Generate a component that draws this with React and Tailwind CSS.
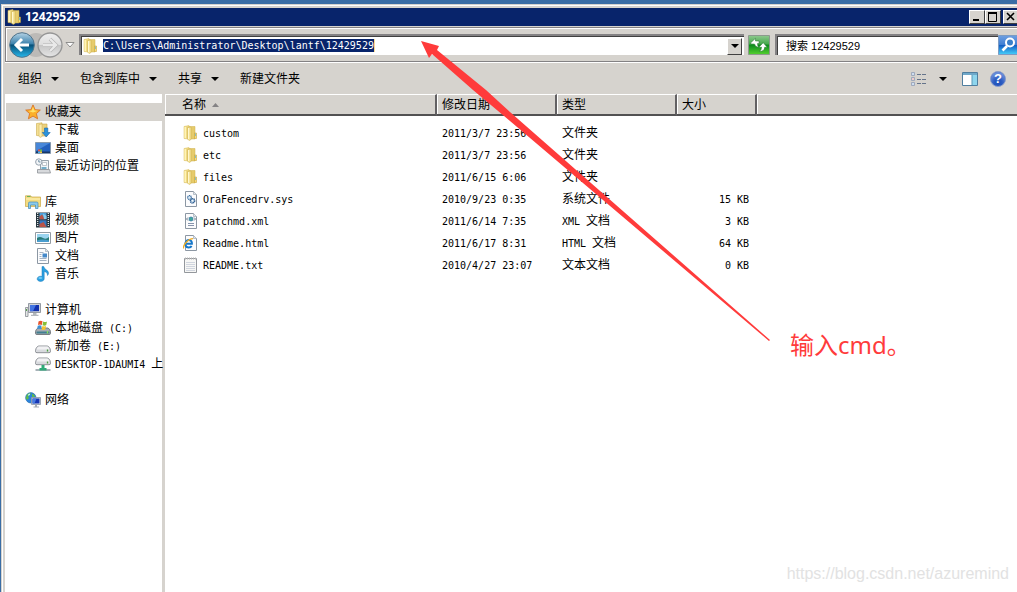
import { useState } from 'react';

const FILES = [
  { name: 'custom', date: '2011/3/7 23:56', type: '文件夹', size: '', icon: FolderIcon },
  { name: 'etc', date: '2011/3/7 23:56', type: '文件夹', size: '', icon: FolderIcon },
  { name: 'files', date: '2011/6/15 6:06', type: '文件夹', size: '', icon: FolderIcon },
  { name: 'OraFencedrv.sys', date: '2010/9/23 0:35', type: '系统文件', size: '15 KB', icon: SysIcon },
  { name: 'patchmd.xml', date: '2011/6/14 7:35', type: 'XML 文档', size: '3 KB', icon: XmlIcon },
  { name: 'Readme.html', date: '2011/6/17 8:31', type: 'HTML 文档', size: '64 KB', icon: HtmlIcon },
  { name: 'README.txt', date: '2010/4/27 23:07', type: '文本文档', size: '0 KB', icon: TxtIcon },
];

const GROUPS = [
  {
    label: '收藏夹',
    icon: StarIcon,
    items: [
      { label: '下载', icon: DownloadIcon },
      { label: '桌面', icon: DesktopIcon },
      { label: '最近访问的位置', icon: RecentIcon },
    ],
  },
  {
    label: '库',
    icon: LibraryIcon,
    items: [
      { label: '视频', icon: VideoIcon },
      { label: '图片', icon: PictureIcon },
      { label: '文档', icon: DocumentIcon },
      { label: '音乐', icon: MusicIcon },
    ],
  },
  {
    label: '计算机',
    icon: ComputerIcon,
    items: [
      { label: '本地磁盘 (C:)', icon: SystemDriveIcon },
      { label: '新加卷 (E:)', icon: DriveIcon },
      { label: 'DESKTOP-1DAUMI4 上', icon: NetDriveIcon },
    ],
  },
  { label: '网络', icon: NetworkIcon, items: [] },
];

const COMMANDS = [
  { label: '组织', menu: true },
  { label: '包含到库中', menu: true },
  { label: '共享', menu: true },
  { label: '新建文件夹', menu: false },
];

function Icon({ children }) {
  return (
    <svg viewBox="0 0 16 16" className="w-4 h-4 shrink-0" aria-hidden="true">
      {children}
    </svg>
  );
}

function FolderIcon() {
  return (
    <Icon>
      <path d="M1 1.500 6 .5v13.500l-5-.5z" fill="#f0db85" stroke="#d8bc5c" strokeWidth=".5" />
      <path d="M1.500 2H3v11H1.500z" fill="#fff3b8" />
      <path d="M6 1.500h6v12.500H6z" fill="#e6cb6c" stroke="#cfb04c" strokeWidth=".5" />
      <path d="M4.500 2.500 8 2v12.500L6 15.500 4.500 14z" fill="#f6e59a" stroke="#c8a845" strokeWidth=".5" />
      <path d="M5 3h1v11H5z" fill="#fff7cf" />
      <path d="M11.500 8h2v5.500h-2z" fill="#f6dc7b" stroke="#c39b2d" strokeWidth=".5" />
      <path d="M12.200 8.600h.8v2.500h-.8z" fill="#6db4d8" />
    </Icon>
  );
}

function Page() {
  return (
    <>
      <path d="M2.500.5h8l3 3v12h-11z" fill="#fcfcfd" stroke="#8c97a3" />
      <path d="M10.500.5v3h3" fill="#dfe5eb" stroke="#a1abb5" strokeWidth=".7" />
    </>
  );
}

function SysIcon() {
  return (
    <Icon>
      <Page />
      <circle cx="6.500" cy="6.500" r="1.900" fill="#dbeaf5" stroke="#35699e" strokeWidth="1.300" strokeDasharray="1 .5" />
      <circle cx="9.500" cy="9.800" r="2.200" fill="#b8d1e6" stroke="#28588c" strokeWidth="1.400" strokeDasharray="1 .5" />
      <circle cx="9.500" cy="9.800" r=".7" fill="#fff" />
    </Icon>
  );
}

function XmlIcon() {
  return (
    <Icon>
      <Page />
      <circle cx="8" cy="6" r="2" fill="#3faa9b" stroke="#2d6fa0" strokeWidth=".7" />
      <path d="m5 4.500-1.500 1.500L5 7.500M11 4.500 12.500 6 11 7.500" fill="none" stroke="#526779" strokeWidth=".9" />
      <path d="M5 10.500h6M5 12.500h6" stroke="#8794ac" />
    </Icon>
  );
}

function HtmlIcon() {
  return (
    <Icon>
      <path d="M2.500.5h8l3 3v12h-11z" fill="#fcfcfd" stroke="#8c97a3" />
      <path d="M10.500.5v3h3" fill="#dfe5eb" stroke="#a1abb5" strokeWidth=".7" />
      <path d="M8.500 10.800c-.7 2-4.900 2.600-6-.4-.9-3.400 1.200-5.300 3.200-5.300 2.300 0 3.400 1.600 3.200 3.700H2.800" fill="none" stroke="#1677ca" strokeWidth="2" />
      <path d="M.8 13.300C-.9 11 5.500 3.500 10 3.600" fill="none" stroke="#f0ad24" strokeWidth="1.300" />
    </Icon>
  );
}

function TxtIcon() {
  return (
    <Icon>
      <path d="M1.500 1.500h12v14h-12z" fill="#f7f7f5" stroke="#93979c" />
      <path d="M2 1.500h11" stroke="#b3b3b3" strokeWidth="2" strokeDasharray="1 1" />
      <path d="M3 5.500h9M3 7.500h9M3 9.500h9M3 11.500h9M3 13.500h9" stroke="#c5ccd8" strokeWidth=".8" />
    </Icon>
  );
}

function StarIcon() {
  return (
    <Icon>
      <path d="m8 .9 2.1 4.800 5.200.4-3.900 3.500 1.200 5.200L8 12.100l-4.600 2.700 1.200-5.200L.7 6.100l5.200-.4z" fill="#fbb02b" stroke="#db7424" strokeWidth=".9" strokeLinejoin="round" />
      <path d="m8 2.700 1.300 3.800 3.500.3L8 8.600 3.300 6.900l3.400-.3z" fill="#ffe36a" />
    </Icon>
  );
}

function DownloadIcon() {
  return (
    <Icon>
      <path d="M1.500 1.500 7 .8V14l-5.500-.5z" fill="#f4df92" stroke="#c9a94e" strokeWidth=".6" />
      <path d="M6 2h6v12H6z" fill="#ecd17b" stroke="#c9a94e" strokeWidth=".6" />
      <path d="M4 2.500 7 2v12.500L5 15.500 4 14z" fill="#fbedae" stroke="#cfae58" strokeWidth=".5" />
      <path d="M9.500 6h3.300v4.500h2.400L11.200 15 7.300 10.500h2.200z" fill="#2b92dc" stroke="#1b68aa" strokeWidth=".6" />
    </Icon>
  );
}

function DesktopIcon() {
  return (
    <Icon>
      <path d="M.5 2.500h15v11H.5z" fill="#2260bd" stroke="#8498ad" />
      <path d="M1 3h14L1 11z" fill="#4787d9" />
      <path d="M1 11.500h14V13H1z" fill="#173768" />
      <path d="M3 9.500h2v2H3z" fill="#ea573e" />
      <path d="M5 9.500h2v2H5z" fill="#74c042" />
      <path d="M3 11.500h2v1.500H3z" fill="#4cb4ee" />
      <path d="M5 11.500h2v1.500H5z" fill="#f6c93c" />
    </Icon>
  );
}

function RecentIcon() {
  return (
    <Icon>
      <path d="M5.500 2.500h8v9h-8z" fill="#f2f5f7" stroke="#98a2aa" />
      <path d="M7.500 4.500h4v3h-4z" fill="#fff" stroke="#a8b0b8" strokeWidth=".7" />
      <path d="M6.500 9h5v2h-5z" fill="#72adc9" />
      <path d="M2.500 11.500h12l1 3.500h-13z" fill="#d7d9dc" stroke="#8d9297" strokeWidth=".8" />
      <circle cx="3.800" cy="4" r="3.200" fill="#f2f5f8" stroke="#97a3ae" />
      <path d="M3.800 2v2h1.700" fill="none" stroke="#56788f" strokeWidth=".8" />
    </Icon>
  );
}

function LibraryIcon() {
  return (
    <Icon>
      <path d="M.5 3.500V1.800h5.200l1 1.200h8.800v9.500H.5z" fill="#f4dc80" stroke="#cba846" strokeWidth=".7" />
      <path d="M2 2.500h3.500" stroke="#67b35a" />
      <path d="M1 5h14" stroke="#fff4be" />
      <path d="M3.500 14.500V9.200q0-1.200 1.200-1.200h7.100q1.200 0 1.200 1.200v5.300h-2.500V11h-5v3.500z" fill="#8bcaec" stroke="#4289b4" strokeWidth=".7" />
    </Icon>
  );
}

function VideoIcon() {
  return (
    <Icon>
      <path d="M1 .5h14v15H1z" fill="#26363f" />
      <path d="M4.500 1h7v6.300h-7z" fill="#4d9fd8" />
      <path d="M4.500 8.300h7V15h-7z" fill="#3778bf" />
      <path d="M4.500 4.500 7 2.500l3.500 4.800h-6zM4.500 12l4-2 3 5h-7z" fill="#b95347" />
      <path d="M8 1.500 11.500 4v3H9z" fill="#89caea" />
      <path d="M2.700 1v14M13.300 1v14" stroke="#f1f4f5" strokeWidth="1.200" strokeDasharray="1 1" />
    </Icon>
  );
}

function PictureIcon() {
  return (
    <Icon>
      <path d="M.5 2.500h15v11H.5z" fill="#fff" stroke="#929ba3" />
      <path d="M2 4h12v8H2z" fill="#9ad4ef" />
      <path d="M2 8q3-2 6 0t6-1v5H2z" fill="#287c79" />
      <path d="M2 10.500q5-2 12 0V12H2z" fill="#4a9ed0" />
    </Icon>
  );
}

function DocumentIcon() {
  return (
    <Icon>
      <Page />
      <path d="M4.500 4.500h4M4.500 6.500h2M4.500 8.500h2M4.500 10.500h7M4.500 12.500h7" stroke="#8e9eb2" strokeWidth=".8" />
      <path d="M7.500 5.500h4.500v4H7.500z" fill="#4488c9" />
    </Icon>
  );
}

function MusicIcon() {
  return (
    <Icon>
      <path d="M7 .6h1.800c.2 3 4.700 3.300 4.700 6.400 0 1-.4 2-1 2.500.3-2.500-1.600-3.600-3.300-4v7.200c0 3.600-7.300 3.600-7 0 .2-2.100 2.800-3 4.800-2.200z" fill="#2aa0e2" stroke="#1677b7" strokeWidth=".5" />
      <ellipse cx="5.300" cy="12" rx="2" ry="1.100" fill="#72ccf5" />
    </Icon>
  );
}

function ComputerIcon() {
  return (
    <Icon>
      <path d="M.5 5.500H3v9H.5z" fill="#e4e6e8" stroke="#878b91" strokeWidth=".8" />
      <path d="M1.500 7v2" stroke="#56a14a" />
      <path d="M3.500 1.500h12v9h-12z" fill="#ced2d8" stroke="#8b929b" strokeWidth=".9" />
      <path d="M5 3h9v6.200H5z" fill="#1231ad" />
      <path d="M5 3h6l-3 6.200H5z" fill="#4374e2" />
      <path d="M8 11h3.500v1.800h2V14H6v-1.200h2z" fill="#b3b8bd" />
    </Icon>
  );
}

function DriveBody({ y = 0 }) {
  return (
    <g transform={`translate(0 ${y})`}>
      <path d="M3.200 5h9.600q2.700 2 2.700 4.500v1q0 1.200-1.500 1.200H2Q.5 11.700.5 10.500v-1Q.5 7 3.200 5z" fill="#d8dade" stroke="#777b82" strokeWidth=".8" />
      <path d="M3.500 5.500h9q2 1.600 2 3H1.500q0-1.400 2-3z" fill="#f1f1f3" />
      <path d="M12.500 8.500v2" stroke="#46a03b" strokeWidth="1.300" />
    </g>
  );
}

function SystemDriveIcon() {
  return (
    <Icon>
      <path d="M3 8h10q2.500 1.600 2.500 3.500v2q0 1-1.500 1H2q-1.500 0-1.500-1v-2Q.5 9.600 3 8z" fill="#a7acb2" stroke="#62686f" strokeWidth=".8" />
      <path d="M1.500 11.500h13v2h-13z" fill="#417f91" />
      <path d="M12.500 11v2.500" stroke="#89e15e" strokeWidth="1.300" />
      <path d="M3.500 1.500Q5.500.3 7.500 1.300L6.800 5Q5 4 3 5z" fill="#e8542c" />
      <path d="M8.200 1.600q2 1 3.800 0l-.8 3.700q-1.800.9-3.700 0z" fill="#86bf37" />
      <path d="M2.800 5.700q2-.9 3.800 0L6 9Q4 8 2 9z" fill="#3e91d4" />
      <path d="M7.400 6q1.900.9 3.700 0l-.8 3.500q-1.800.8-3.600 0z" fill="#f5c42d" />
    </Icon>
  );
}

function DriveIcon() {
  return (
    <Icon>
      <DriveBody y={3} />
    </Icon>
  );
}

function NetDriveIcon() {
  return (
    <Icon>
      <DriveBody y={-3} />
      <path d="M.5 14h15" stroke="#9eabb0" strokeWidth="1.800" />
      <path d="M6.500 9h3v3h2v2.500h-7V12h2z" fill="#2faa79" />
    </Icon>
  );
}

function NetworkIcon() {
  return (
    <Icon>
      <circle cx="5.800" cy="5.800" r="5.200" fill="#2b83dd" stroke="#256ba9" strokeWidth=".6" />
      <path d="M2 2.500Q4 .5 6 1l-1 2-2 1 1 2-2 2-1.200-2zM7 1.500l3 2-1 2-2-1z" fill="#60bd49" />
      <path d="M3 2.500 5 1.500v1.300L3.500 4z" fill="#c9f5ff" />
      <path d="M6.500 5.500h9v7h-9z" fill="#d8dde4" stroke="#8c96a5" strokeWidth=".8" />
      <path d="M7.500 6.500h7v5h-7z" fill="#1737b6" />
      <path d="M7.500 6.500h4l-2 5h-2z" fill="#477be1" />
      <path d="M10 13h2v1.500h2v1H8.500v-1H10z" fill="#a5abb5" />
    </Icon>
  );
}

function Caret() {
  return (
    <svg viewBox="0 0 8 4" className="w-2 h-1 shrink-0" aria-hidden="true">
      <path d="M0 0h8L4 4z" fill="#000" />
    </svg>
  );
}

// Latin runs are set smaller than the Chinese so that they take half its width
function Label({ text }) {
  return text.split(/([\x20-\x7e]+)/).map((part, i) =>
    i % 2 ? (
      <span key={i} className="text-[10px] whitespace-pre">{part}</span>
    ) : (
      part
    )
  );
}

function TitleBar() {
  const button =
    'flex items-center justify-center w-4 h-[14px] bg-[#d6d3ce] border border-t-white border-l-white border-r-[#404040] border-b-[#404040]';
  return (
    <header className="flex items-center h-[18px] bg-[#08246b] text-white pl-[2px] pr-[2px]">
      <FolderIcon />
      <h1 className="ml-[2px] flex-1 font-['Noto_Sans'] text-xs leading-4 font-bold">12429529</h1>
      <button className={button} aria-label="最小化">
        <svg viewBox="0 0 12 10" className="w-3 h-[10px]">
          <path d="M2 7h6v2H2z" />
        </svg>
      </button>
      <button className={button} aria-label="最大化">
        <svg viewBox="0 0 12 10" className="w-3 h-[10px]" fill="none" stroke="#000">
          <path d="M1.500 1v8.500h8V1" />
          <path d="M1 1h9" strokeWidth="2" />
        </svg>
      </button>
      <button className={`${button} ml-[2px]`} aria-label="关闭">
        <svg viewBox="0 0 12 10" className="w-3 h-[10px]" stroke="#000" strokeWidth="1.600">
          <path d="m2 1 7 7M9 1 2 8" />
        </svg>
      </button>
    </header>
  );
}

function HistoryButtons() {
  return (
    <div className="relative flex items-center gap-[2px]">
      <div className="absolute left-4 right-4 h-6 top-[1px] bg-[#bcbab7] rounded-full" />
      <button className="relative" aria-label="后退">
        <svg viewBox="0 0 26 26" className="w-[26px] h-[26px]">
          <defs>
            <linearGradient id="back" x1="0" y1="0" x2="0" y2="1">
              <stop offset="0" stopColor="#b5d3e5" />
              <stop offset=".45" stopColor="#3c82ad" />
              <stop offset=".5" stopColor="#075078" />
              <stop offset="1" stopColor="#27b8ec" />
            </linearGradient>
          </defs>
          <circle cx="13" cy="13" r="12.300" fill="url(#back)" stroke="#51738a" />
          <path d="M13 7 7 13l6 6M7.500 13H20" fill="none" stroke="#fff" strokeWidth="3" />
        </svg>
      </button>
      <button className="relative" aria-label="前进">
        <svg viewBox="0 0 26 26" className="w-[26px] h-[26px]">
          <defs>
            <linearGradient id="forward" x1="0" y1="0" x2="0" y2="1">
              <stop offset="0" stopColor="#efefef" />
              <stop offset=".48" stopColor="#dedede" />
              <stop offset=".52" stopColor="#c6c6c6" />
              <stop offset="1" stopColor="#e6e6e6" />
            </linearGradient>
          </defs>
          <circle cx="13" cy="13" r="12" fill="url(#forward)" stroke="#969696" strokeWidth="1.300" />
          <path d="m13 7 6 6-6 6M18.500 13H6" fill="none" stroke="#b2b2b2" strokeWidth="3.600" />
          <path d="m13 7 6 6-6 6M18.500 13H6" fill="none" stroke="#e9e9e9" strokeWidth="2.400" />
        </svg>
      </button>
    </div>
  );
}

function AddressBar({ path, onPathChange, query, onQueryChange }) {
  return (
    <div className="flex items-center h-[35px] pl-[3px] border-t border-l border-b border-[#848284] shadow-[inset_1px_1px_0_#fff,0_1px_0_#fff] mt-px">
      <HistoryButtons />
      <button className="ml-[2px] mr-1" aria-label="最近的页面">
        <svg viewBox="0 0 10 6" className="w-[10px] h-[6px]">
          <path d="M1 .5h8L5 5z" fill="#fff" stroke="#777" strokeWidth=".8" />
        </svg>
      </button>

      <div className="flex flex-1 items-center h-[21px] bg-white border-t-2 border-l-2 border-[#848284] shadow-[inset_1px_1px_0_#404040]">
        <span className="ml-[2px]">
          <FolderIcon />
        </span>
        <input
          aria-label="地址"
          value={path}
          onChange={(e) => onPathChange(e.target.value)}
          className="field-sizing-content ml-1 h-[13px] bg-[#08246b] text-white text-[10px] leading-3 border-r border-[#f7db94] outline-none"
        />
        <button
          aria-label="以前的位置"
          className="ml-auto mr-[2px] mt-[1px] flex items-center justify-center w-[15px] h-[17px] bg-[#d6d3ce] border border-t-white border-l-white border-r-[#404040] border-b-[#404040]"
        >
          <Caret />
        </button>
      </div>

      <button aria-label="刷新" className="ml-1 mr-[5px]">
        <svg viewBox="0 0 22 20" className="w-[22px] h-5">
          <defs>
            <linearGradient id="refresh" x1="0" y1="0" x2="0" y2="1">
              <stop offset="0" stopColor="#8fc98f" />
              <stop offset=".45" stopColor="#45a94b" />
              <stop offset=".5" stopColor="#0c8a1c" />
              <stop offset="1" stopColor="#55d12f" />
            </linearGradient>
          </defs>
          <path d="M.5.500h21v19H.5z" fill="url(#refresh)" stroke="#8d9a8d" />
          <path d="M2.500 8 7.500 3.300V6H11v2.500H9.500q-.2 2 1.300 3.700Q7 12 6.500 9H3.300z" fill="#fff" stroke="#1d6f27" strokeWidth=".5" />
          <path d="M19.200 12.200 15.200 7.700 10.800 12.200h2.700q.1 2.700-2.100 4.300 5.400-.3 5.300-4.300z" fill="#fff" stroke="#1d6f27" strokeWidth=".5" />
        </svg>
      </button>

      <input
        type="search"
        aria-label="搜索"
        placeholder="搜索 12429529"
        value={query}
        onChange={(e) => onQueryChange(e.target.value)}
        className="w-[223px] h-[21px] pl-[9px] bg-white font-['Liberation_Sans','Noto_Sans_CJK_SC',sans-serif] text-[11px] placeholder:text-black border-t-2 border-l-2 border-[#848284] shadow-[inset_1px_1px_0_#404040] outline-none"
      />
      <button aria-label="开始搜索">
        <svg viewBox="0 0 23 20" className="w-[23px] h-5">
          <defs>
            <linearGradient id="search" x1="0" y1="0" x2="0" y2="1">
              <stop offset="0" stopColor="#6f9fe0" />
              <stop offset=".48" stopColor="#3f7fd4" />
              <stop offset=".52" stopColor="#145fc4" />
              <stop offset="1" stopColor="#45d0fb" />
            </linearGradient>
          </defs>
          <path d="M.5.500h22v19H.5z" fill="url(#search)" stroke="#7b9bc4" />
          <circle cx="12" cy="7.500" r="4" fill="#3b7fca" stroke="#fff" strokeWidth="2" />
          <path d="m9 11-4.500 4.500" stroke="#fff" strokeWidth="2.600" />
        </svg>
      </button>
    </div>
  );
}

function Toolbar() {
  return (
    <div className="flex items-center h-[30px] mt-[2px] pl-[13px] pr-[15px]">
      <div className="flex items-center gap-[21px]">
        {COMMANDS.map((c) => (
          <button key={c.label} className="flex items-center gap-[9px]">
            {c.label}
            {c.menu && <Caret />}
          </button>
        ))}
      </div>
      <button aria-label="更改您的视图" className="ml-auto">
        <svg viewBox="0 0 16 14" className="w-4 h-[14px]">
          <path d="M.5.500h3v3h-3zM.5 5.500h3v3h-3zM.5 10.500h3v3h-3z" fill="#f7f8fb" stroke="#8d9bb3" strokeWidth=".8" />
          <path d="M1.500 1.500h1v1h-1zM1.500 11.500h1v1h-1z" fill="#538aca" />
          <path d="M1.500 6.500h1v1h-1z" fill="#d43e3e" />
          <path d="M6 2.500h4M11 2.500h4M6 7.500h4M11 7.500h4M6 11.500h4M11 11.500h4" stroke="#65748b" />
        </svg>
      </button>
      <button aria-label="更多选项" className="ml-3">
        <Caret />
      </button>
      <button aria-label="显示预览窗格" className="ml-[15px]">
        <svg viewBox="0 0 16 14" className="w-4 h-[14px]">
          <path d="M.5.500h15v13H.5z" fill="#fff" stroke="#4f7e9f" />
          <path d="M1 1h14v2H1z" fill="#6fa8c9" />
          <path d="M10 3h5v10h-5z" fill="#8ed5ed" />
          <path d="M10 3v10" stroke="#5c98b6" />
        </svg>
      </button>
      <button aria-label="获取帮助" className="relative ml-3 w-4 h-4 rounded-full bg-[#2455bd] border border-[#8a9dcb] shadow-[inset_0_4px_4px_#6d91dc] text-white font-['Liberation_Sans'] text-[13px] leading-[14px] font-bold">
        ?
      </button>
    </div>
  );
}

function Sidebar() {
  return (
    <nav className="w-40 shrink-0 pt-[9px] bg-white border-r-[3px] border-[#d6d3ce]">
      {GROUPS.map((group, i) => (
        <section key={group.label} className="mb-[18px]">
          <a
            href="#"
            className={`flex items-center gap-1 h-[18px] ml-px pl-[19px] ${i === 0 ? 'bg-[#d6d3ce]' : ''}`}
          >
            <group.icon />
            {group.label}
          </a>
          {group.items.map((item) => (
            <a key={item.label} href="#" className="flex items-center gap-1 h-[18px] pl-[30px]">
              <item.icon />
              <span className="whitespace-nowrap">
                <Label text={item.label} />
              </span>
            </a>
          ))}
        </section>
      ))}
    </nav>
  );
}

function FileList() {
  const head =
    'h-[22px] p-0 pl-[5px] text-left font-normal bg-[#d6d3ce] border-t border-t-white border-b-2 border-b-[#525152] border-r-2 border-r-[#636163] shadow-[inset_1px_0_0_#fff]';
  return (
    <main className="flex-1 min-w-0 bg-white">
      <table className="w-full table-fixed border-separate border-spacing-0">
        <thead>
          <tr>
            <th className={`${head} w-[272px] pl-[17px]`}>
              <span className="flex items-center gap-[6px]">
                名称
                <svg viewBox="0 0 7 4" className="w-[7px] h-1" aria-hidden="true">
                  <path d="M0 4h7L3.500 0z" fill="#848284" />
                </svg>
              </span>
            </th>
            <th className={`${head} w-[120px]`}>修改日期</th>
            <th className={`${head} w-[120px]`}>类型</th>
            <th className={`${head} w-20`}>大小</th>
            <th className={head} aria-label="空" />
          </tr>
        </thead>
        <tbody className="before:block before:h-[6px]">
          {FILES.map((f) => (
            <tr key={f.name} className="h-[22px]">
              <td className="p-0 pl-[18px]">
                <span className="flex items-center gap-1">
                  <f.icon />
                  <span>
                    <Label text={f.name} />
                  </span>
                </span>
              </td>
              <td className="p-0 pl-[5px]"><Label text={f.date} /></td>
              <td className="p-0 pl-[5px]"><Label text={f.type} /></td>
              <td className="p-0 pr-[8px] text-right"><Label text={f.size} /></td>
              <td />
            </tr>
          ))}
        </tbody>
      </table>
    </main>
  );
}

function Annotation() {
  return (
    <div className="absolute inset-0 pointer-events-none">
      <svg viewBox="0 0 1017 592" className="absolute left-0 top-0 w-[1017px] h-[592px]" aria-hidden="true">
        <path d="M421 41 439 46 437 50 486 90 510 112 770 340 769 341 510 121 473 90 432 54 429 58z" fill="#ff3b3b" />
      </svg>
      <p className="absolute left-[790px] top-[329px] font-['Noto_Sans','Noto_Sans_CJK_SC',sans-serif] text-2xl text-[#ff3b3b]">
        输入cmd。
      </p>
      <p className="absolute right-2 bottom-[6px] font-['Liberation_Sans'] text-base text-[#e2e2e2]">
        https://blog.csdn.net/azuremind
      </p>
    </div>
  );
}

function App() {
  const [path, setPath] = useState('C:\\Users\\Administrator\\Desktop\\lantf\\12429529');
  const [query, setQuery] = useState('');

  return (
    <div className="relative flex min-h-screen overflow-hidden pt-1 pl-px bg-[#3a6da5] font-['DejaVu_Sans_Mono','Noto_Sans_CJK_SC',monospace] text-xs leading-4 text-black">
      <div className="flex flex-1 flex-col min-w-0 -mr-1 pt-1 pl-1 bg-[#d6d3ce] shadow-[inset_1px_1px_0_#d6d3ce,inset_2px_2px_0_#fff]">
        <TitleBar />
        <AddressBar path={path} onPathChange={setPath} query={query} onQueryChange={setQuery} />
        <Toolbar />
        <div className="flex flex-1">
          <Sidebar />
          <FileList />
        </div>
      </div>
      <Annotation />
    </div>
  );
}

export default App;
